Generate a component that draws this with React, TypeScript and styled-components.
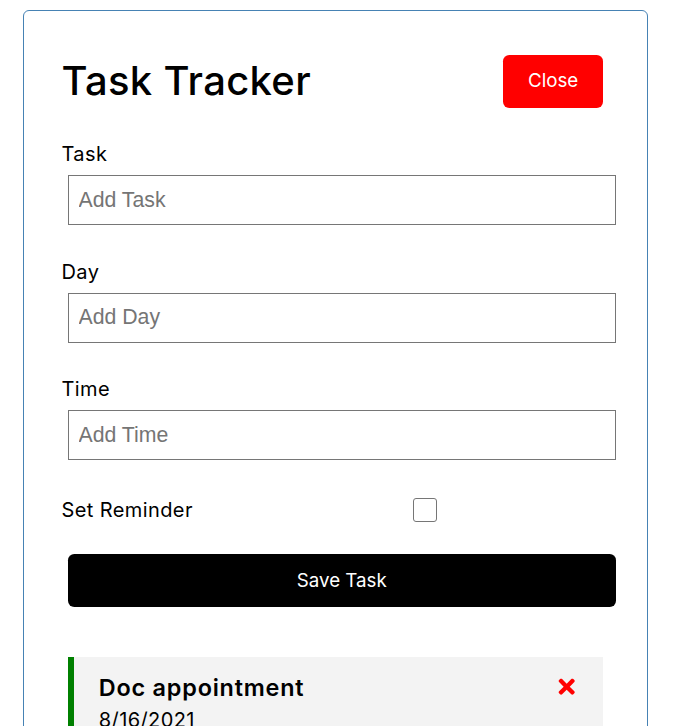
import styled, { createGlobalStyle } from 'styled-components';
import { FaTimes } from 'react-icons/fa';

const GlobalStyle = createGlobalStyle`
  * {
    box-sizing: border-box;
    margin: 0;
    padding: 0;
  }
  body {
    font-family: Inter, 'Open Sans', sans-serif;
    font-size: 20px;
    line-height: 1.5;
    background: #fff;
    color: #000;
  }
`;

const Container = styled.div`
  width: 625px;
  margin: 10px 0 0 23px;
  min-height: 375px;
  overflow: hidden;
  border: 1px solid steelblue;
  border-radius: 6px;
  padding: 37.5px;
`;

const Header = styled.header`
  display: flex;
  justify-content: space-between;
  align-items: center;
  margin-bottom: 25px;
`;

const Title = styled.h1`
  font-size: 40px;
  font-weight: 500;
  line-height: 60px;
  letter-spacing: 0.3px;
`;

const Button = styled.button<{ $bg?: string; $block?: boolean }>`
  display: ${(p) => (p.$block ? 'block' : 'inline-block')};
  width: ${(p) => (p.$block ? '100%' : 'auto')};
  background: ${(p) => p.$bg || '#000'};
  color: #fff;
  border: none;
  padding: 12.5px 25px;
  margin: 6.25px;
  border-radius: 6.25px;
  font-family: inherit;
  font-size: 18.75px;
  line-height: 28px;
  cursor: pointer;
`;

const Form = styled.form`
  margin-bottom: 50px;
`;

const Field = styled.div`
  display: flow-root;
  margin: 25px 0;
`;

const Label = styled.label`
  display: block;
  line-height: 30px;
  letter-spacing: 0.4px;
`;

const Input = styled.input`
  display: block;
  width: 100%;
  height: 50px;
  margin: 6.25px;
  padding: 3.75px 9.75px;
  font-family: 'Liberation Sans', Arial, sans-serif;
  font-size: 21.25px;
  border: 1px solid #767676;
  border-radius: 0;
  color: #000;
  &::placeholder {
    color: #757575;
  }
`;

const CheckRow = styled.div`
  display: flex;
  align-items: center;
  justify-content: space-between;
  margin: 25px 0;
  & > label {
    flex: 1;
    line-height: 30px;
    letter-spacing: 0.4px;
  }
`;

const CheckCell = styled.div`
  flex: 2;
  height: 25px;
  margin: 6.25px;
  display: flex;
  justify-content: center;
  align-items: center;
`;

const CheckBox = styled.input`
  appearance: none;
  width: 24px;
  height: 24px;
  border: 1px solid #767676;
  border-radius: 3px;
  background: #fff;
`;

const Task = styled.div<{ $reminder?: boolean }>`
  background: #f3f3f3;
  margin: 6.25px;
  padding: 12.5px 25px;
  border-left: ${(p) => (p.$reminder ? '6.25px solid green' : 'none')};
`;

const TaskTitle = styled.h3`
  display: flex;
  align-items: center;
  justify-content: space-between;
  font-size: 23.4px;
  font-weight: 600;
  line-height: 35px;
  letter-spacing: 0.8px;
  svg {
    color: red;
    cursor: pointer;
  }
`;

const TaskDay = styled.p`
  line-height: 30px;
  letter-spacing: 0.4px;
`;

export default function App() {
  return (
    <>
      <GlobalStyle />
      <Container>
        <Header>
          <Title>Task Tracker</Title>
          <Button $bg="red">Close</Button>
        </Header>
        <Form onSubmit={(e) => e.preventDefault()}>
          <Field>
            <Label>Task</Label>
            <Input type="text" placeholder="Add Task" />
          </Field>
          <Field>
            <Label>Day</Label>
            <Input type="text" placeholder="Add Day" />
          </Field>
          <Field>
            <Label>Time</Label>
            <Input type="text" placeholder="Add Time" />
          </Field>
          <CheckRow>
            <label>Set Reminder</label>
            <CheckCell>
              <CheckBox type="checkbox" />
            </CheckCell>
          </CheckRow>
          <Button type="submit" $block>
            Save Task
          </Button>
        </Form>
        <Task $reminder>
          <TaskTitle>
            Doc appointment
            <FaTimes />
          </TaskTitle>
          <TaskDay>8/16/2021</TaskDay>
        </Task>
      </Container>
    </>
  );
}
